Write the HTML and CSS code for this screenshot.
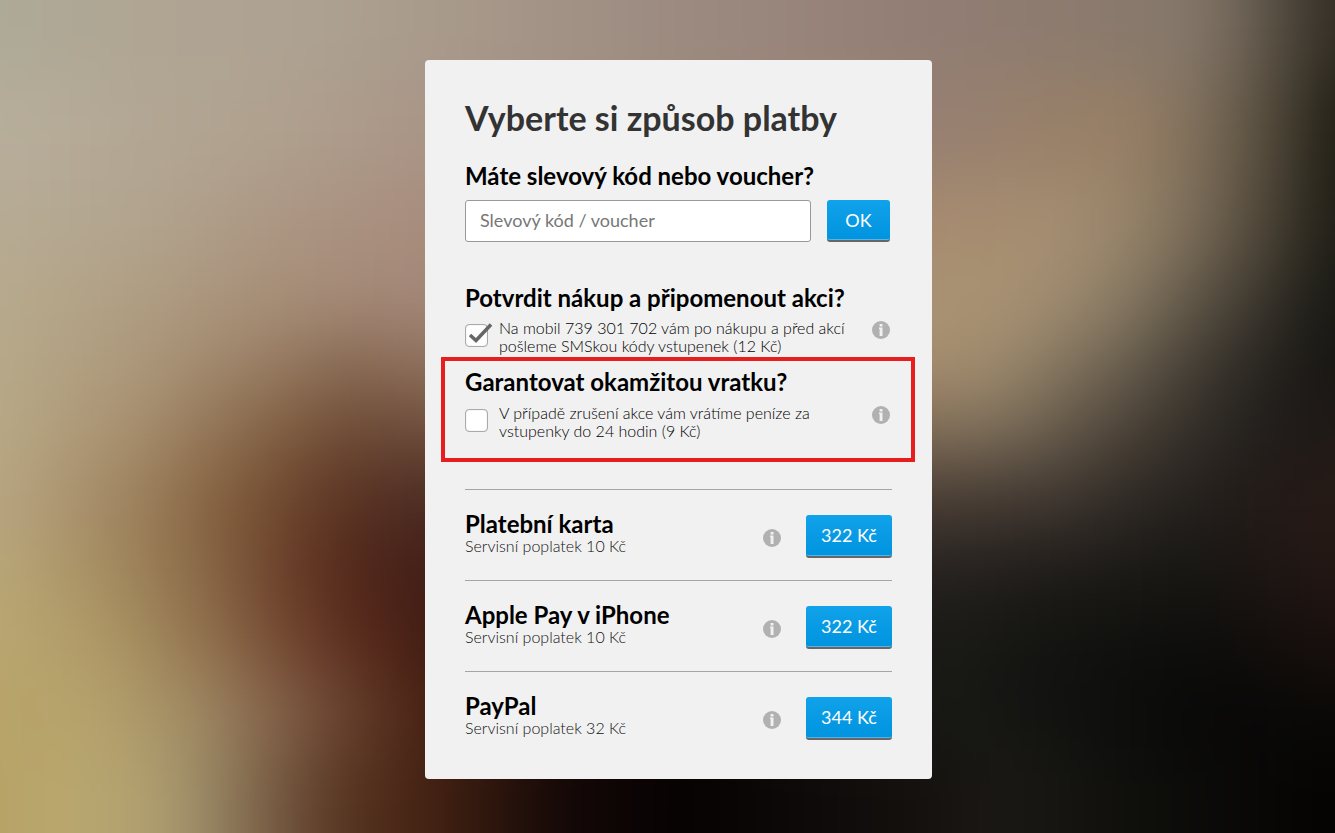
FILE: index.html
```html
<!DOCTYPE html>
<html lang="cs">
<head>
<meta charset="utf-8">
<meta name="viewport" content="width=device-width, initial-scale=1">
<title>Vyberte si způsob platby</title>
<link rel="stylesheet" href="styles.css">
</head>
<body>
<svg class="backdrop" viewBox="0 0 1335 833" preserveAspectRatio="none" aria-hidden="true">
  <defs>
    <filter id="soft" filterUnits="userSpaceOnUse" x="-150" y="-200" width="1635" height="1233" color-interpolation-filters="sRGB"><feGaussianBlur stdDeviation="30 34"/></filter>
    <linearGradient id="g0" gradientUnits="userSpaceOnUse" x1="0" x2="1335" y1="0" y2="0"><stop offset="0" stop-color="#aeaa98"/><stop offset=".105" stop-color="#b0a593"/><stop offset=".21" stop-color="#aea393"/><stop offset=".318" stop-color="#a99b8c"/><stop offset=".509" stop-color="#9c8a80"/><stop offset=".697" stop-color="#927d74"/><stop offset=".794" stop-color="#8d7b6e"/><stop offset=".899" stop-color="#84776a"/><stop offset=".951" stop-color="#5c5346"/><stop offset="1" stop-color="#2f2a22"/></linearGradient>
    <linearGradient id="g1" href="#g0"><stop offset="0" stop-color="#b8ae9b"/><stop offset=".105" stop-color="#b2a794"/><stop offset=".21" stop-color="#b0a08e"/><stop offset=".318" stop-color="#a99587"/><stop offset=".697" stop-color="#968072"/><stop offset=".794" stop-color="#998068"/><stop offset=".854" stop-color="#977f65"/><stop offset=".899" stop-color="#7d6d5a"/><stop offset=".951" stop-color="#544b3c"/><stop offset="1" stop-color="#1d1b12"/></linearGradient>
    <linearGradient id="g2" href="#g0"><stop offset="0" stop-color="#b6ab94"/><stop offset=".105" stop-color="#b2a48e"/><stop offset=".21" stop-color="#ab9683"/><stop offset=".318" stop-color="#a88c7c"/><stop offset=".697" stop-color="#a78b6f"/><stop offset=".794" stop-color="#a58e72"/><stop offset=".846" stop-color="#97856a"/><stop offset=".899" stop-color="#776957"/><stop offset=".951" stop-color="#4a4234"/><stop offset="1" stop-color="#1c1b14"/></linearGradient>
    <linearGradient id="g3" href="#g0"><stop offset="0" stop-color="#b8aa8c"/><stop offset=".105" stop-color="#af9d82"/><stop offset=".21" stop-color="#a68d76"/><stop offset=".318" stop-color="#a38678"/><stop offset=".697" stop-color="#aa9274"/><stop offset=".749" stop-color="#a99273"/><stop offset=".794" stop-color="#a08b70"/><stop offset=".846" stop-color="#857862"/><stop offset=".899" stop-color="#5c5244"/><stop offset=".951" stop-color="#35312a"/><stop offset="1" stop-color="#161612"/></linearGradient>
    <linearGradient id="g4" href="#g0"><stop offset="0" stop-color="#b6a98a"/><stop offset=".105" stop-color="#ac977a"/><stop offset=".21" stop-color="#95795f"/><stop offset=".262" stop-color="#85664f"/><stop offset=".318" stop-color="#8d6f5c"/><stop offset=".697" stop-color="#a78e6f"/><stop offset=".749" stop-color="#9c896c"/><stop offset=".794" stop-color="#82745e"/><stop offset=".846" stop-color="#655b4c"/><stop offset=".899" stop-color="#3f3931"/><stop offset=".951" stop-color="#24211d"/><stop offset="1" stop-color="#171511"/></linearGradient>
    <linearGradient id="g5" href="#g0"><stop offset="0" stop-color="#b8a985"/><stop offset=".105" stop-color="#a68d6d"/><stop offset=".21" stop-color="#7f5d41"/><stop offset=".262" stop-color="#6c4934"/><stop offset=".318" stop-color="#6b4b39"/><stop offset=".697" stop-color="#7f6d57"/><stop offset=".749" stop-color="#7c6d5a"/><stop offset=".794" stop-color="#635848"/><stop offset=".846" stop-color="#4a4036"/><stop offset=".899" stop-color="#302c27"/><stop offset=".951" stop-color="#1e1c19"/><stop offset="1" stop-color="#201917"/></linearGradient>
    <linearGradient id="g6" href="#g0"><stop offset="0" stop-color="#b8a582"/><stop offset=".105" stop-color="#9c805c"/><stop offset=".157" stop-color="#85623f"/><stop offset=".21" stop-color="#70492f"/><stop offset=".255" stop-color="#5c3322"/><stop offset=".318" stop-color="#4b2b23"/><stop offset=".697" stop-color="#493d34"/><stop offset=".794" stop-color="#3f3630"/><stop offset=".846" stop-color="#2e2925"/><stop offset=".899" stop-color="#221f1b"/><stop offset=".951" stop-color="#241a17"/><stop offset="1" stop-color="#271a16"/></linearGradient>
    <linearGradient id="g7" href="#g0"><stop offset="0" stop-color="#b9a778"/><stop offset=".075" stop-color="#a68e61"/><stop offset=".15" stop-color="#8a6a49"/><stop offset=".21" stop-color="#6b4029"/><stop offset=".262" stop-color="#52281a"/><stop offset=".318" stop-color="#421d17"/><stop offset=".697" stop-color="#262220"/><stop offset=".794" stop-color="#1f1c19"/><stop offset=".899" stop-color="#171613"/><stop offset="1" stop-color="#241714"/></linearGradient>
    <linearGradient id="g8" href="#g0"><stop offset="0" stop-color="#b9a670"/><stop offset=".075" stop-color="#b09a68"/><stop offset=".15" stop-color="#92744f"/><stop offset=".21" stop-color="#754932"/><stop offset=".262" stop-color="#5c2c1d"/><stop offset=".318" stop-color="#431e13"/><stop offset=".509" stop-color="#100804"/><stop offset=".697" stop-color="#1b1b17"/><stop offset=".794" stop-color="#121310"/><stop offset=".899" stop-color="#0d0d0b"/><stop offset="1" stop-color="#1a0f0d"/></linearGradient>
    <linearGradient id="g9" href="#g0"><stop offset="0" stop-color="#b8a468"/><stop offset=".075" stop-color="#b5a26c"/><stop offset=".15" stop-color="#9f8863"/><stop offset=".21" stop-color="#82614a"/><stop offset=".262" stop-color="#67402d"/><stop offset=".318" stop-color="#4a2214"/><stop offset=".42" stop-color="#180a07"/><stop offset=".509" stop-color="#080303"/><stop offset=".697" stop-color="#191a16"/><stop offset=".794" stop-color="#111310"/><stop offset=".899" stop-color="#080808"/><stop offset="1" stop-color="#0a0907"/></linearGradient>
    <linearGradient id="g10" href="#g0"><stop offset="0" stop-color="#b8a265"/><stop offset=".045" stop-color="#b9a86f"/><stop offset=".112" stop-color="#b2a070"/><stop offset=".15" stop-color="#9a8c68"/><stop offset=".195" stop-color="#7d6349"/><stop offset=".255" stop-color="#573522"/><stop offset=".318" stop-color="#462313"/><stop offset=".42" stop-color="#140807"/><stop offset=".509" stop-color="#060202"/><stop offset=".697" stop-color="#15110f"/><stop offset=".749" stop-color="#1b1915"/><stop offset=".846" stop-color="#0f0f0c"/><stop offset="1" stop-color="#040302"/></linearGradient>
  </defs>
  <g filter="url(#soft)">
    <path fill="url(#g0)" d="M-150-200H1485V80H-150z"/>
    <path fill="url(#g1)" d="M-150 80H1485V180H-150z"/>
    <path fill="url(#g2)" d="M-150 180H1485V265H-150z"/>
    <path fill="url(#g3)" d="M-150 265H1485V335H-150z"/>
    <path fill="url(#g4)" d="M-150 335H1485V400H-150z"/>
    <path fill="url(#g5)" d="M-150 400H1485V465H-150z"/>
    <path fill="url(#g6)" d="M-150 465H1485V535H-150z"/>
    <path fill="url(#g7)" d="M-150 535H1485V605H-150z"/>
    <path fill="url(#g8)" d="M-150 605H1485V675H-150z"/>
    <path fill="url(#g9)" d="M-150 675H1485V750H-150z"/>
    <path fill="url(#g10)" d="M-150 750H1485V1033H-150z"/>
  </g>
</svg>
<svg class="symbols" aria-hidden="true">
  <symbol id="info" viewBox="0 0 18 18"><circle cx="9" cy="9" r="9" fill="#b1b1b1"/><path fill="#f1f1f1" d="M7.600 3h2.900v2.500H7.600zM7 6.500h3.500V15H7.600V8H7z"/></symbol>
</svg>
<main class="page">
  <div class="card">
    <h1 class="title">Vyberte si způsob platby</h1>
    <form class="voucher">
      <h2 class="heading"><label for="code">Máte slevový kód nebo voucher?</label></h2>
      <div class="voucher-row">
        <input class="field" id="code" type="text" placeholder="Slevový kód / voucher">
        <button class="button button-ok" type="button">OK</button>
      </div>
    </form>
    <section class="option">
      <h2 class="heading">Potvrdit nákup a připomenout akci?</h2>
      <div class="option-row">
        <span class="check"><input class="box" id="sms" type="checkbox" checked><svg class="tick" viewBox="0 0 28 24" aria-hidden="true"><path d="M5 12l6 5.500L26 1.500" fill="none" stroke="#666" stroke-width="3.500"/></svg></span>
        <label class="option-text" for="sms">Na mobil 739 301 702 vám po nákupu a před akcí pošleme SMSkou kódy vstupenek (12 Kč)</label>
        <svg class="info" role="img" aria-label="Informace"><use href="#info"/></svg>
      </div>
    </section>
    <section class="option option-marked">
      <h2 class="heading">Garantovat okamžitou vratku?</h2>
      <div class="option-row">
        <span class="check"><input class="box" id="refund" type="checkbox"><svg class="tick" viewBox="0 0 28 24" aria-hidden="true"><path d="M5 12l6 5.500L26 1.500" fill="none" stroke="#666" stroke-width="3.500"/></svg></span>
        <label class="option-text" for="refund">V případě zrušení akce vám vrátíme peníze za vstupenky do 24 hodin (9 Kč)</label>
        <svg class="info" role="img" aria-label="Informace"><use href="#info"/></svg>
      </div>
    </section>
    <ul class="methods">
      <li class="method">
        <div class="method-text"><h2 class="method-name">Platební karta</h2><p class="fee">Servisní poplatek 10 Kč</p></div>
        <svg class="info" role="img" aria-label="Informace"><use href="#info"/></svg>
        <button class="button" type="button">322 Kč</button>
      </li>
      <li class="method">
        <div class="method-text"><h2 class="method-name">Apple Pay v iPhone</h2><p class="fee">Servisní poplatek 10 Kč</p></div>
        <svg class="info" role="img" aria-label="Informace"><use href="#info"/></svg>
        <button class="button" type="button">322 Kč</button>
      </li>
      <li class="method">
        <div class="method-text"><h2 class="method-name">PayPal</h2><p class="fee">Servisní poplatek 32 Kč</p></div>
        <svg class="info" role="img" aria-label="Informace"><use href="#info"/></svg>
        <button class="button" type="button">344 Kč</button>
      </li>
    </ul>
  </div>
</main>
</body>
</html>
```
FILE: styles.css
```css
* { box-sizing: border-box; }

body {
  margin: 0;
  background: #000;
  color: #000;
  font-family: Lato, "Open Sans", sans-serif;
}

.backdrop {
  position: fixed;
  inset: 0;
  width: 100%;
  height: 100%;
  z-index: -1;
}

.symbols { display: none; }

.page {
  display: flex;
  justify-content: center;
  padding: 60px 0 54px 22px;
}

.card {
  width: 100%;
  max-width: 507px;
  padding: 38px 40px 17px;
  border-radius: 4px;
  background: #f1f1f1;
}

.title {
  margin: 0;
  color: #333;
  font-size: 34px;
  line-height: 40px;
  font-weight: 700;
}

.heading {
  margin: 0;
  font-size: 24px;
  line-height: 28px;
  font-weight: 700;
}

.voucher { margin-top: 24px; }

.voucher-row {
  display: flex;
  gap: 16px;
  margin-top: 10px;
  padding-right: 2px;
}

.field {
  flex: 1;
  min-width: 0;
  height: 42px;
  padding: 0 14px 2px;
  border: 1px solid #999;
  border-radius: 3px;
  background: #fff;
  color: #333;
  font: 18px Lato, sans-serif;
}

.field::placeholder { color: #777; }

.button {
  min-width: 86px;
  height: 43px;
  padding: 0 8px;
  border: 0;
  border-bottom: 2px solid #666;
  border-radius: 3px;
  background: linear-gradient(#10a2ea, #0093df);
  box-shadow: inset 0 -1px #55b4e8;
  color: #fff;
  font: 18px Lato, sans-serif;
}

.button-ok {
  min-width: 63px;
  height: 42px;
}

.option { margin-top: 42px; }

.option-row {
  display: flex;
  align-items: flex-start;
  margin-top: 7px;
  padding-right: 2px;
}

.check {
  position: relative;
  display: flex;
  padding-top: 5px;
}

.box {
  appearance: none;
  width: 23px;
  height: 23px;
  margin: 0;
  border: 1px solid #aaa;
  border-radius: 4px;
  background: #fff;
  box-shadow: inset 0 0 1px #aaa;
}

.tick {
  position: absolute;
  left: 0;
  top: 4px;
  width: 28px;
  height: 24px;
  visibility: hidden;
  pointer-events: none;
}

.box:checked + .tick { visibility: visible; }

.option-text {
  flex: 1;
  margin: 0 20px 0 11px;
  color: #000;
  font-size: 16px;
  line-height: 18px;
  font-weight: 300;
}

.info {
  flex: none;
  width: 18px;
  height: 18px;
}

.option-row .info { margin-top: 2px; }

.option-marked {
  margin: 2px -23px 0 -24px;
  padding: 7px 19px 18px 20px;
  border: 4px solid #e81e1e;
}

.option-marked .option-row { margin-top: 8px; }

.methods {
  margin: 27px 0 0;
  padding: 0;
  list-style: none;
}

.method {
  display: flex;
  align-items: center;
  height: 91px;
  padding-top: 2px;
  border-top: 1px solid #a5a5a5;
}

.method-text {
  flex: 1;
  padding-bottom: 4px;
}

.method .info { margin: 4px 25px 0 0; }

.method-name {
  margin: 0;
  font-size: 24px;
  line-height: 24px;
  font-weight: 700;
}

.fee {
  margin: 0;
  color: #111;
  font-size: 16px;
  line-height: 20px;
  font-weight: 300;
}
```
